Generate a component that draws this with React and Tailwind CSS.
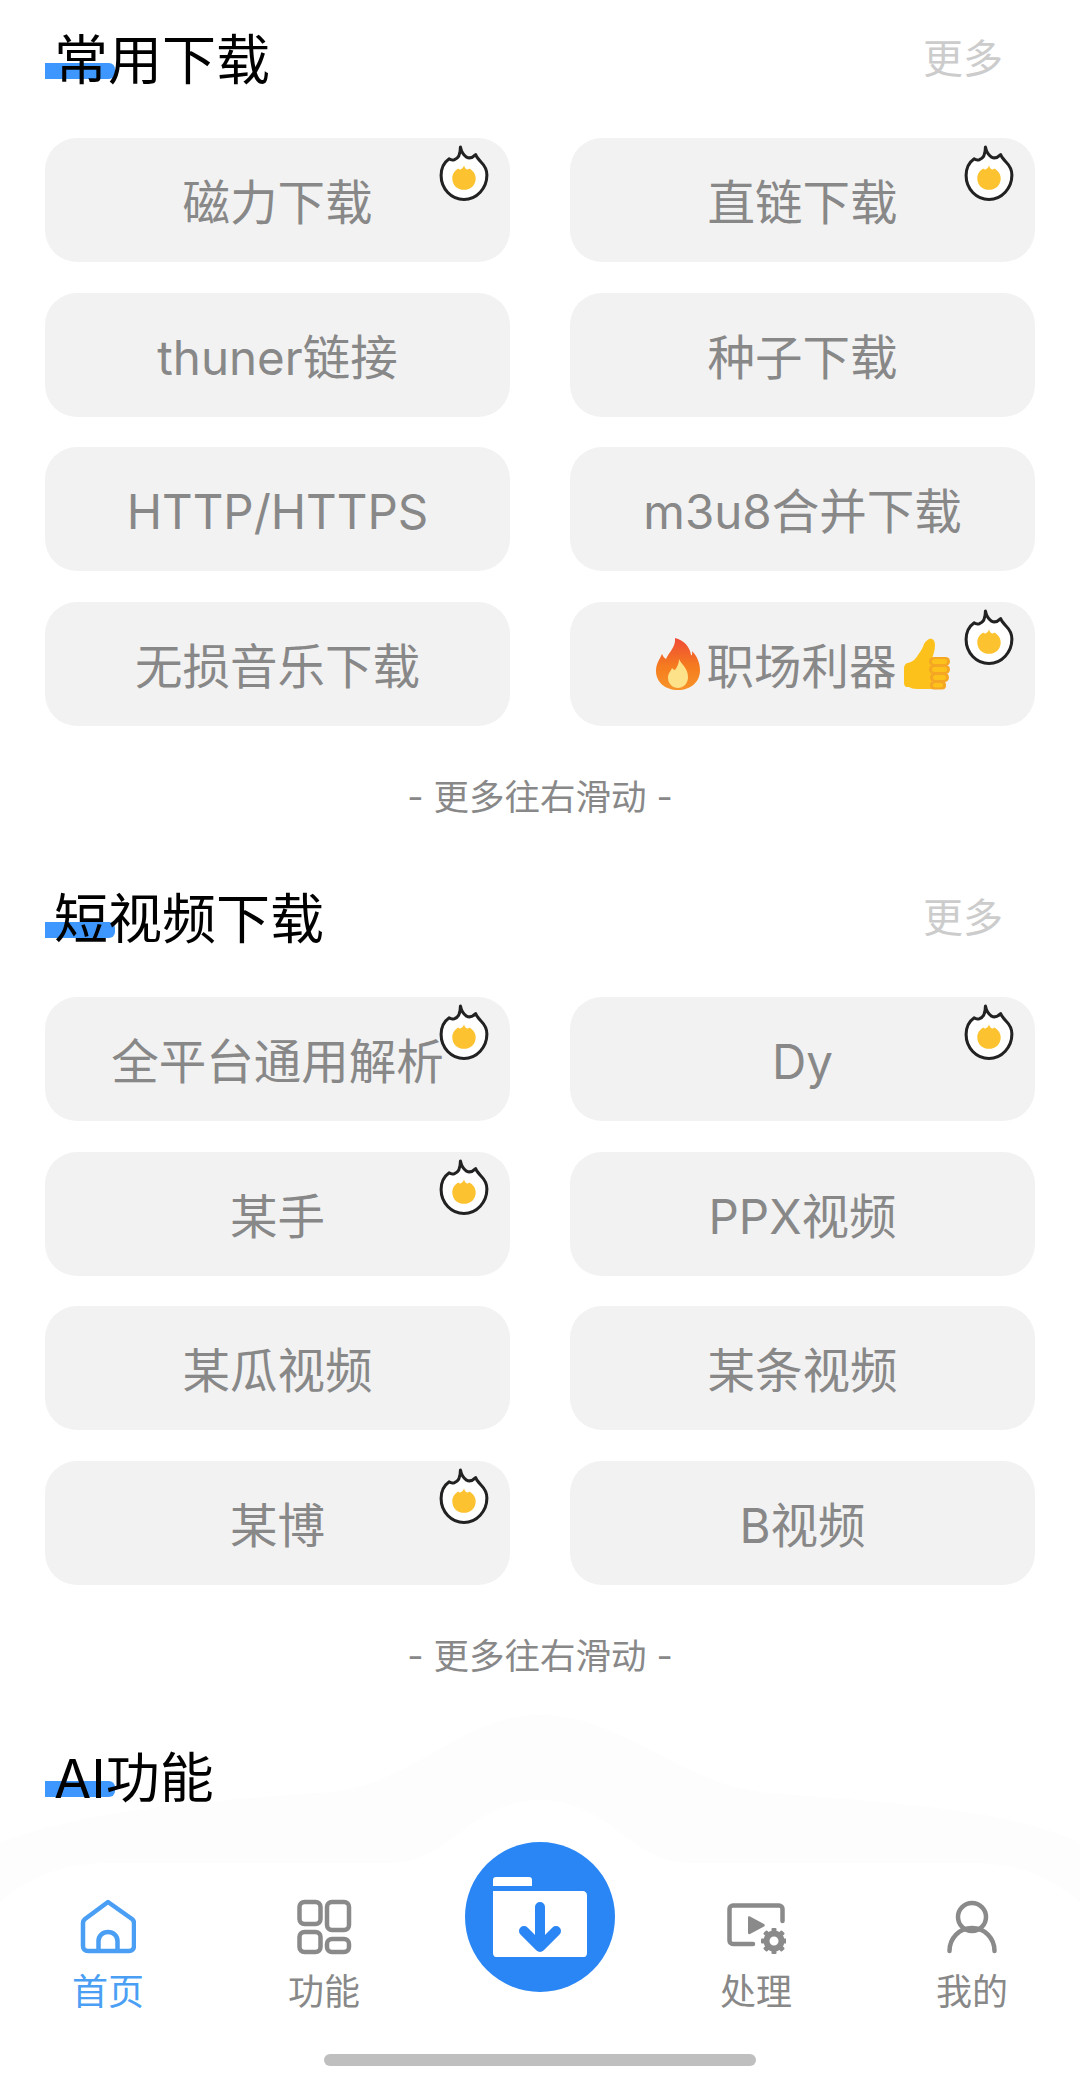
const hot = [
  { label: "磁力下载", badge: true },
  { label: "直链下载", badge: true },
  { label: "thuner链接" },
  { label: "种子下载" },
  { label: "HTTP/HTTPS" },
  { label: "m3u8合并下载" },
  { label: "无损音乐下载" },
  { label: "职场利器", badge: true, emoji: true },
];

const video = [
  { label: "全平台通用解析", badge: true },
  { label: "Dy", badge: true },
  { label: "某手", badge: true },
  { label: "PPX视频" },
  { label: "某瓜视频" },
  { label: "某条视频" },
  { label: "某博", badge: true },
  { label: "B视频" },
];

function HotBadge() {
  return (
    <svg viewBox="0 0 49 57" className="absolute right-[21px] top-[7px] h-[58px] w-[50px]">
      <path
        d="M21 2c1 5 3 8 6 10 3 1.500 6 .5 9-2.500 1 3 3 4.500 5 7 4 4 6 8 6 13 0 13-10 24-22.500 24S2 43 2 30c0-7 3-13 8-16.500 1 1 3 1.500 5 1 5-1.500 6-7 6-12.500z"
        fill="#fff"
        stroke="#222"
        strokeWidth="3"
        strokeLinejoin="round"
      />
      <path
        d="M24.500 20c.6 2.500 1.500 3.600 3 4.200 1-.3 1.500-.6 2-1.200 4 2 6.500 5.500 6.500 9.800 0 6.400-5 11.200-11.500 11.200S13 39.200 13 32.800c0-4.500 2.500-7.800 6-9.800.5.700 1 1 2 1.200 2-1 3-2.200 3.500-4.200z"
        fill="#fcc22f"
      />
    </svg>
  );
}

function FireEmoji() {
  return (
    <svg viewBox="0 0 46 54" className="h-[54px] w-[46px] shrink-0">
      <defs>
        <linearGradient id="fireOuter" x1="0" y1="0" x2="0" y2="1">
          <stop offset="0" stopColor="#ef4a36" />
          <stop offset="0.55" stopColor="#f57c1f" />
          <stop offset="1" stopColor="#f79329" />
        </linearGradient>
      </defs>
      <path
        d="M20 1c9 2 15 9 16 17 1 1 1.500-1 1-4 5 5 8 12 8 19 0 12-9 20-22 20S1 45 1 34c0-8 4-12 6-17 1 2 2 4 4 5 3-7 10-12 9-21z"
        fill="url(#fireOuter)"
      />
      <path
        d="M24 22c2 5 9 9 9 18 0 7-5 11-10 11s-10-4-10-10c0-5 3-7 4-10 1 1 2 2 3 2 2-3 4-6 4-11z"
        fill="#fde28a"
      />
    </svg>
  );
}

function ThumbEmoji() {
  return (
    <svg viewBox="0 0 48 52" className="h-[52px] w-[48px] shrink-0">
      <path
        d="M26 1c4-1 6 2 6 6 0 6-2 10-3 14v30H14c-4 0-6-1-8-2H4c-2 0-3-2-3-4V30c0-3 2-5 4-5 4-1 7-3 10-8 3-4 5-8 6-11 1-2 3-4 5-5z"
        fill="#fcc21b"
      />
      <g fill="#f5a623">
        <rect x="26" y="19" width="21" height="9" rx="4.500" />
        <rect x="26" y="27" width="21" height="9" rx="4.500" />
        <rect x="27" y="35" width="19" height="9" rx="4.500" />
        <rect x="27" y="43" width="16" height="8.500" rx="4" />
      </g>
      <g fill="#fcc21b">
        <rect x="29" y="21" width="15" height="5" rx="2.500" />
        <rect x="29" y="29" width="15" height="5" rx="2.500" />
        <rect x="30" y="37" width="13" height="5" rx="2.500" />
        <rect x="30" y="45" width="10" height="4.500" rx="2" />
      </g>
    </svg>
  );
}

function Card({ item }) {
  return (
    <div className="relative flex h-[124px] items-center justify-center rounded-[32px] bg-[#f2f2f2] text-[47.500px] text-[#888888]">
      {item.emoji && <FireEmoji />}
      <span className={item.emoji ? "mx-[6px] translate-y-[3px]" : "translate-y-[3px]"}>{item.label}</span>
      {item.emoji && <ThumbEmoji />}
      {item.badge && <HotBadge />}
    </div>
  );
}

function SectionTitle({ title, more }) {
  return (
    <div className="flex h-[72px] items-center justify-between">
      <div className="relative pl-[9px] text-[54px] leading-[72px] text-black">
        <span className="absolute left-0 top-[39px] h-[16px] w-[70px] rounded-r-[6px] bg-[#3e97ff]" />
        <span className="relative top-[1px]">{title}</span>
      </div>
      {more && <span className="mr-[32px] -translate-y-[1px] text-[40px] text-[#cccccc]">更多</span>}
    </div>
  );
}

function Section({ title, items }) {
  return (
    <section className="h-[859px] pt-[24px]">
      <SectionTitle title={title} more />
      <div className="mt-[42px] grid grid-cols-2 gap-x-[60px] gap-y-[30.500px]">
        {items.map((item) => (
          <Card key={item.label} item={item} />
        ))}
      </div>
      <p className="mt-[48px] text-center text-[35.500px] leading-[48px] text-[#888888]">- 更多往右滑动 -</p>
    </section>
  );
}

function HomeIcon() {
  return (
    <svg viewBox="0 0 56 56" className="h-[56px] w-[56px]" fill="none" stroke="#4a9ff5" strokeWidth="4.500" strokeLinejoin="round">
      <path d="M28 3 52 20c1 .800 2 2 2 4v23c0 3-2 5-5 5H8c-3 0-5-2-5-5V24c0-2 1-3.200 2-4z" />
      <path d="M18.500 52V42c0-5 4-9 9.500-9s9.500 4 9.500 9v10" />
    </svg>
  );
}

function GridIcon() {
  return (
    <svg viewBox="0 0 56 56" className="h-[56px] w-[56px]" fill="none" stroke="#8a8a8a" strokeWidth="4.500">
      <rect x="3.500" y="3" width="21" height="22" rx="5" />
      <rect x="31" y="3" width="22" height="28" rx="5" />
      <rect x="3.500" y="33" width="21" height="20" rx="5" />
      <rect x="31" y="40" width="22" height="13" rx="5" />
    </svg>
  );
}

function MediaIcon() {
  return (
    <svg viewBox="0 0 60 56" className="h-[56px] w-[60px]" fill="none">
      <path d="M27 45H7c-2 0-3.500-1.500-3.500-3.500V10C3.500 8 5 6.500 7 6.500h46c2 0 3.500 1.500 3.500 3.500v12" stroke="#8a8a8a" strokeWidth="4.500" strokeLinecap="round" />
      <path d="M22 18.500c0-1 1-1.500 2-1l14 7.500c1 .500 1 2 0 2.500l-14 7.500c-1 .500-2 0-2-1z" fill="#8a8a8a" />
      <circle cx="48" cy="42" r="7.500" stroke="#8a8a8a" strokeWidth="6" />
      {[0, 45, 90, 135, 180, 225, 270, 315].map((deg) => (
        <rect key={deg} x="45.500" y="29" width="5" height="5" rx="1" fill="#8a8a8a" transform={`rotate(${deg} 48 42)`} />
      ))}
    </svg>
  );
}

function UserIcon() {
  return (
    <svg viewBox="0 0 56 56" className="h-[56px] w-[56px]" fill="none" stroke="#8a8a8a" strokeWidth="4.500" strokeLinecap="round">
      <circle cx="28" cy="18" r="14" />
      <path d="M5.500 52c0-13 10-23 22.500-23s22.500 10 22.500 23" />
    </svg>
  );
}

function FolderIcon() {
  return (
    <svg viewBox="0 0 94 80" className="h-[80px] w-[94px]">
      <path d="M0 3c0-2 1-3 3-3h33c2 0 3 1 3 3v6H0z" fill="#fff" />
      <path d="M0 14h90c2 0 4 2 4 4v58c0 2-1 4-3 4H3c-2 0-3-2-3-4z" fill="#fff" />
      <path d="M47 30v40M31 54l16 16 16-16" fill="none" stroke="#2b86f5" strokeWidth="10" strokeLinecap="round" strokeLinejoin="round" />
    </svg>
  );
}

function NavItem({ label, active, children }) {
  return (
    <div className="flex flex-col items-center">
      <div className="flex h-[56px] items-center justify-center">{children}</div>
      <span className={`mt-[13px] text-[36px] leading-[48px] ${active ? "text-[#4a9ff5]" : "text-[#888888]"}`}>{label}</span>
    </div>
  );
}

function BottomNav() {
  return (
    <div className="absolute bottom-0 left-0 h-[380px] w-full">
      {/* faint shadow + bump behind the tab bar */}
      <svg viewBox="0 0 1080 380" className="absolute inset-0 h-full w-full">
        <path d="M0 135C100 100 200 95 330 85 420 75 460 8 540 8 620 8 680 75 760 85 880 95 1000 100 1080 135V380H0z" fill="#fdfdfd" />
        <path d="M0 195C30 170 60 156 110 156H390C450 156 470 93 540 93 610 93 630 156 690 156H970C1020 156 1050 170 1080 195V380H0z" fill="#fff" />
      </svg>
      <div className="absolute inset-x-0 top-[192px] grid grid-cols-5">
        <NavItem label="首页" active>
          <HomeIcon />
        </NavItem>
        <NavItem label="功能">
          <GridIcon />
        </NavItem>
        <div />
        <NavItem label="处理">
          <MediaIcon />
        </NavItem>
        <NavItem label="我的">
          <UserIcon />
        </NavItem>
      </div>
      <div className="absolute left-[465px] top-[135px] flex h-[150px] w-[150px] items-center justify-center rounded-full bg-[#2b86f5]">
        <FolderIcon />
      </div>
      <div className="absolute bottom-[21px] left-[324px] h-[12px] w-[432px] rounded-full bg-[#bfbfbf]" />
    </div>
  );
}

export default function App() {
  return (
    <div className="relative h-[2087px] w-[1080px] overflow-hidden bg-white px-[45px] font-['Inter','Noto_Sans_CJK_SC',sans-serif]">
      <Section title="常用下载" items={hot} />
      <Section title="短视频下载" items={video} />
      <section className="pt-[24px]">
        <SectionTitle title="AI功能" />
      </section>
      <BottomNav />
    </div>
  );
}
